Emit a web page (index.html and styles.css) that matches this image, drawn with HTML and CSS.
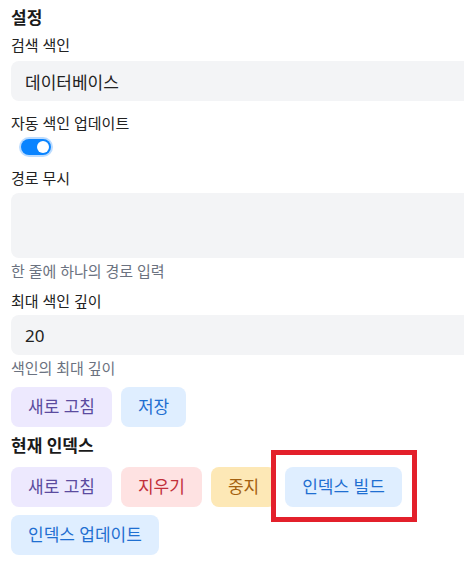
FILE: index.html
```html
<!DOCTYPE html>
<html lang="ko">
<head>
<meta charset="utf-8">
<title>설정</title>
<link rel="stylesheet" href="styles.css">
</head>
<body>
<div class="panel">
  <h2 class="section-title">설정</h2>

  <label class="field-label label-first">검색 색인</label>
  <input class="text-input input-first" type="text" value="데이터베이스">

  <label class="field-label label-gap">자동 색인 업데이트</label>
  <div class="toggle-row">
    <span class="toggle"><span class="knob"></span></span>
  </div>

  <label class="field-label label-after-toggle">경로 무시</label>
  <textarea class="text-area"></textarea>
  <p class="hint">한 줄에 하나의 경로 입력</p>

  <label class="field-label label-after-hint">최대 색인 깊이</label>
  <input class="text-input input-second" type="text" value="20">
  <p class="hint">색인의 최대 깊이</p>

  <div class="btn-row row-top">
    <button class="btn btn-purple">새로 고침</button>
    <button class="btn btn-blue">저장</button>
  </div>

  <h2 class="section-title title-second">현재 인덱스</h2>

  <div class="btn-row row-index">
    <button class="btn btn-purple">새로 고침</button>
    <button class="btn btn-red">지우기</button>
    <button class="btn btn-yellow">중지</button>
    <span class="highlight"><button class="btn btn-blue">인덱스 빌드</button></span>
    <button class="btn btn-blue">인덱스 업데이트</button>
  </div>
</div>
</body>
</html>
```

FILE: styles.css
```css
* { box-sizing: border-box; }

html, body {
  margin: 0;
  padding: 0;
  background: #ffffff;
  overflow: hidden;
}

body {
  font-family: "Noto Sans", "Noto Sans CJK KR", sans-serif;
  color: #222222;
}

.panel {
  width: 520px;
  padding: 6px 0 0 11px;
  display: flex;
  flex-direction: column;
  align-items: flex-start;
}

.section-title {
  margin: 0;
  font-size: 17px;
  line-height: 24px;
  font-weight: 700;
  color: #1a1a1a;
}

.title-second { margin-top: 7px; }

.field-label {
  display: block;
  font-size: 15px;
  line-height: 20px;
  color: #222222;
}

.label-first { margin-top: 5px; }
.label-gap { margin-top: 12px; }
.label-after-toggle { margin-top: 11px; }
.label-after-hint { margin-top: 10px; }

.text-input {
  display: block;
  width: 100%;
  height: 40px;
  border: none;
  border-radius: 8px;
  background: #f3f4f6;
  padding: 0 14px;
  font-family: inherit;
  font-size: 17px;
  color: #222222;
  outline: none;
}

.input-first { margin-top: 6px; }
.input-second { margin-top: 4px; }

.text-area {
  display: block;
  width: 100%;
  height: 65px;
  margin-top: 5px;
  border: none;
  border-radius: 8px;
  background: #f3f4f6;
  resize: none;
  outline: none;
  font-family: inherit;
}

.hint {
  margin: 3px 0 0;
  font-size: 15px;
  line-height: 20px;
  color: #6b7280;
}

.toggle-row {
  margin-top: 4px;
  height: 20px;
  padding: 2px 0 0 10px;
}

.toggle {
  display: flex;
  align-items: center;
  justify-content: flex-end;
  width: 30px;
  height: 16px;
  padding: 0 2px;
  border-radius: 8px;
  background: #0a84ff;
  box-shadow: 0 0 0 2px #bcdcff;
}

.knob {
  width: 12px;
  height: 12px;
  border-radius: 50%;
  background: #ffffff;
}

.btn-row {
  display: flex;
  flex-wrap: wrap;
  column-gap: 9px;
  row-gap: 8px;
}

.row-top { margin-top: 9px; }
.row-index { margin-top: 9px; }

.btn {
  height: 40px;
  padding: 0 17px;
  border: none;
  border-radius: 8px;
  font-family: inherit;
  font-size: 17px;
  line-height: 40px;
  cursor: pointer;
}

.btn-purple { background: #ede9fe; color: #5b4b9f; }
.btn-blue { background: #dfeeff; color: #1f6fd1; }
.btn-red { background: #fee2e2; color: #c2303a; }
.btn-yellow { background: #fde8b6; color: #a4610f; }

.highlight {
  position: relative;
  display: flex;
}

.highlight::after {
  content: "";
  position: absolute;
  top: -17px;
  bottom: -15px;
  left: -14px;
  right: -15px;
  border: 5px solid #e3202b;
  pointer-events: none;
}
```
